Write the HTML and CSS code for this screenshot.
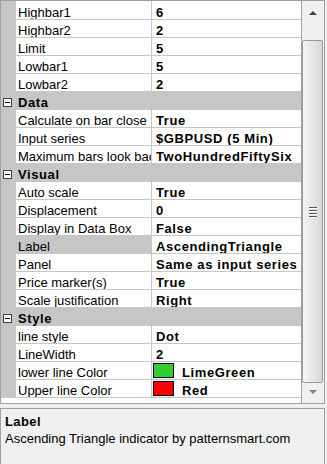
FILE: index.html
```html
<!DOCTYPE html>
<html>
<head>
<meta charset="utf-8">
<link rel="stylesheet" href="styles.css">
</head>
<body>
<div class="grid">
  <div class="rows">
    <div class="row first"><div class="mg"></div><div class="nm">Highbar1</div><div class="vl">6</div></div>
    <div class="row"><div class="mg"></div><div class="nm">Highbar2</div><div class="vl">2</div></div>
    <div class="row"><div class="mg"></div><div class="nm">Limit</div><div class="vl">5</div></div>
    <div class="row"><div class="mg"></div><div class="nm">Lowbar1</div><div class="vl">5</div></div>
    <div class="row"><div class="mg"></div><div class="nm">Lowbar2</div><div class="vl">2</div></div>
    <div class="cat"><span class="box"></span><span class="ct">Data</span></div>
    <div class="row"><div class="mg"></div><div class="nm">Calculate on bar close</div><div class="vl">True</div></div>
    <div class="row"><div class="mg"></div><div class="nm">Input series</div><div class="vl">$GBPUSD (5 Min)</div></div>
    <div class="row"><div class="mg"></div><div class="nm">Maximum bars look back</div><div class="vl">TwoHundredFiftySix</div></div>
    <div class="cat"><span class="box"></span><span class="ct">Visual</span></div>
    <div class="row"><div class="mg"></div><div class="nm">Auto scale</div><div class="vl">True</div></div>
    <div class="row"><div class="mg"></div><div class="nm">Displacement</div><div class="vl">0</div></div>
    <div class="row"><div class="mg"></div><div class="nm">Display in Data Box</div><div class="vl">False</div></div>
    <div class="row"><div class="mg"></div><div class="nm sel">Label</div><div class="vl">AscendingTriangle</div></div>
    <div class="row"><div class="mg"></div><div class="nm">Panel</div><div class="vl">Same as input series</div></div>
    <div class="row"><div class="mg"></div><div class="nm">Price marker(s)</div><div class="vl">True</div></div>
    <div class="row"><div class="mg"></div><div class="nm">Scale justification</div><div class="vl">Right</div></div>
    <div class="cat"><span class="box"></span><span class="ct">Style</span></div>
    <div class="row"><div class="mg"></div><div class="nm">line style</div><div class="vl">Dot</div></div>
    <div class="row"><div class="mg"></div><div class="nm">LineWidth</div><div class="vl">2</div></div>
    <div class="row"><div class="mg"></div><div class="nm">lower line Color</div><div class="vl"><span class="sw green"></span>LimeGreen</div></div>
    <div class="row"><div class="mg"></div><div class="nm">Upper line Color</div><div class="vl"><span class="sw red"></span>Red</div></div>
  </div>
  <div class="sb">
    <div class="arrow up"></div>
    <div class="track">
      <div class="thumb"><span class="grip"></span><span class="grip"></span><span class="grip"></span><span class="grip"></span></div>
    </div>
    <div class="arrow down"></div>
  </div>
</div>
<div class="help">
  <div class="ht">Label</div>
  <div class="hd">Ascending Triangle indicator by patternsmart.com</div>
</div>
</body>
</html>
```

FILE: styles.css
```css
html, body {
  margin: 0;
  padding: 0;
}
body {
  width: 327px;
  height: 464px;
  overflow: hidden;
  background: #f0f0f0;
  font-family: "Liberation Sans", Arial, sans-serif;
  font-size: 13px;
  color: #000;
}
.grid {
  display: flex;
  width: 325px;
  height: 404px;
  box-sizing: border-box;
  border: 1px solid #a0a0a0;
  background: #fff;
}
.rows {
  width: 301px;
  display: flex;
  flex-direction: column;
  overflow: hidden;
}
.row {
  display: flex;
  height: 18px;
  flex: none;
}
.row.first {
  height: 19px;
}
.mg {
  width: 15px;
  background: #c6c6c6;
  flex: none;
}
.nm, .vl {
  box-sizing: border-box;
  height: 18px;
  padding-top: 3px;
  line-height: 15px;
  border-bottom: 1px solid #c6c6c6;
  white-space: nowrap;
  overflow: hidden;
  flex: none;
}
.row.first .nm, .row.first .vl {
  height: 19px;
  padding-top: 4px;
}
.nm {
  width: 136px;
  padding-left: 2px;
  border-right: 1px solid #c6c6c6;
}
.nm.sel {
  background: #c6c6c6;
}
.vl {
  width: 150px;
  padding-left: 4px;
  font-weight: bold;
  letter-spacing: 0.6px;
  display: flex;
  align-items: flex-start;
}
.sw {
  width: 19px;
  height: 13px;
  border: 1px solid #000;
  margin-left: -3px;
  margin-top: -2px;
  margin-right: 8px;
  flex: none;
}
.sw.green { background: #32cd32; }
.sw.red { background: #ff0000; }
.cat {
  box-sizing: border-box;
  height: 18px;
  flex: none;
  background: #c6c6c6;
  display: flex;
  align-items: flex-start;
  padding-top: 3px;
  line-height: 15px;
  font-weight: bold;
  letter-spacing: 0.6px;
}
.box {
  box-sizing: border-box;
  width: 9px;
  height: 9px;
  border: 1px solid #404040;
  margin-left: 2px;
  margin-right: 6px;
  margin-top: 3px;
  background: #fff;
  position: relative;
  flex: none;
}
.box::after {
  content: "";
  position: absolute;
  left: 1px;
  top: 3px;
  width: 5px;
  height: 1px;
  background: #000;
}
.sb {
  width: 22px;
  border-left: 1px solid #a0a0a0;
  background: #f0f0f0;
  display: flex;
  flex-direction: column;
}
.arrow {
  height: 39px;
  position: relative;
  flex: none;
}
.arrow.up::after {
  content: "";
  position: absolute;
  left: 7px;
  top: 10px;
  border-left: 4px solid transparent;
  border-right: 4px solid transparent;
  border-bottom: 4px solid #404040;
}
.arrow.down {
  height: 20px;
}
.arrow.down::after {
  content: "";
  position: absolute;
  left: 7px;
  top: 7px;
  border-left: 4px solid transparent;
  border-right: 4px solid transparent;
  border-top: 4px solid #808080;
}
.track {
  flex: 1;
  display: flex;
}
.thumb {
  flex: 1;
  margin: 0 1px 0 0;
  border: 1px solid #9a9a9a;
  border-radius: 2px;
  background: linear-gradient(to right, #f4f4f4, #e6e6e6 50%, #d8d8d8);
  display: flex;
  flex-direction: column;
  align-items: center;
  justify-content: center;
  gap: 2px;
}
.grip {
  width: 8px;
  height: 1px;
  background: #555;
  box-shadow: 0 1px 0 #fff;
}
.help {
  margin-top: 4px;
  height: 56px;
  box-sizing: border-box;
  border: 1px solid #a0a0a0;
  border-bottom: none;
  padding: 4px 4px;
  width: 325px;
}
.ht {
  font-weight: bold;
  line-height: 17px;
  letter-spacing: 0.4px;
}
.hd {
  line-height: 17px;
}
```
